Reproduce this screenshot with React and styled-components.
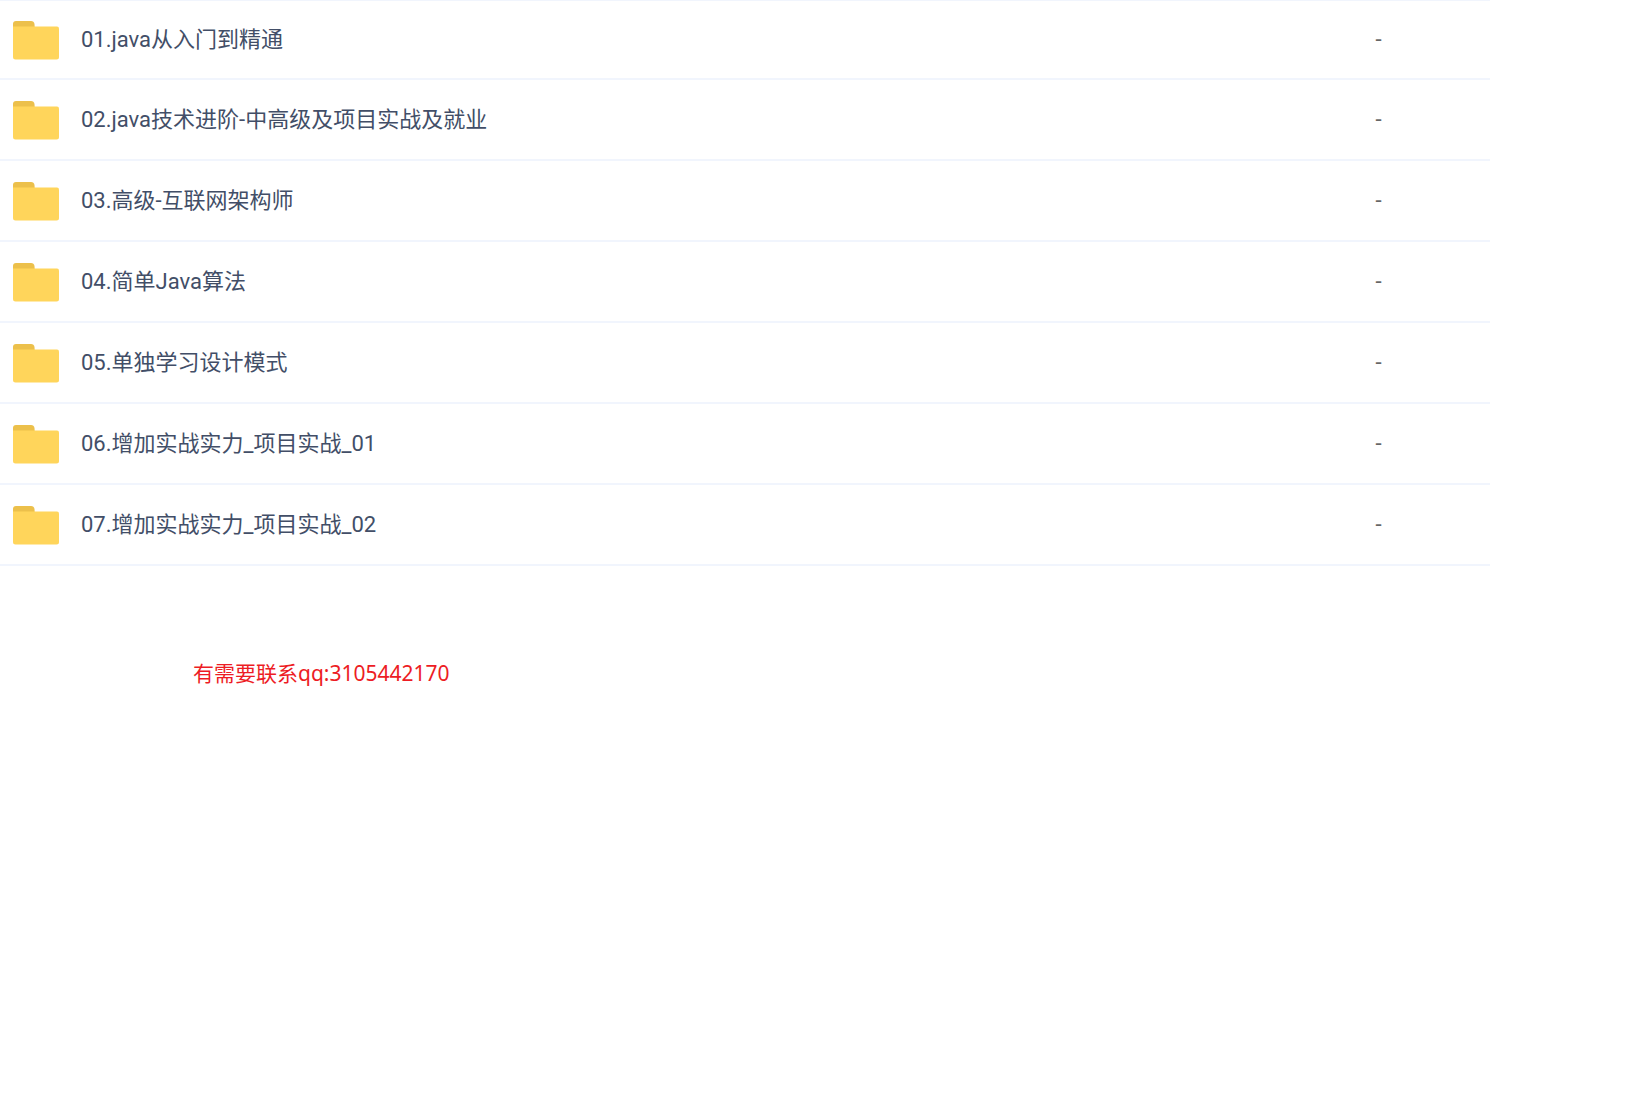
import React from "react";
import styled, { createGlobalStyle } from "styled-components";

const folders = [
  { name: "01.java从入门到精通", size: "-" },
  { name: "02.java技术进阶-中高级及项目实战及就业", size: "-" },
  { name: "03.高级-互联网架构师", size: "-" },
  { name: "04.简单Java算法", size: "-" },
  { name: "05.单独学习设计模式", size: "-" },
  { name: "06.增加实战实力_项目实战_01", size: "-" },
  { name: "07.增加实战实力_项目实战_02", size: "-" },
];

function FolderIcon() {
  return (
    <FolderSvg viewBox="0 0 46 39" aria-hidden="true">
      <path d="M0 10V3Q0 0 3 0H18Q21 0 21.500 3L22 10Z" fill="#ecc04b" />
      <path
        d="M0 5.500H44Q46 5.500 46 7.500V36Q46 38.500 43.500 38.500H2.500Q0 38.500 0 36Z"
        fill="#ffd55b"
      />
    </FolderSvg>
  );
}

function App() {
  return (
    <>
      <GlobalStyle />
      <PageStyled>
        <FileTable>
          <tbody>
            {folders.map((folder) => (
              <FileRow key={folder.name}>
                <NameCell>
                  <FolderLink href="#">
                    <FolderIcon />
                    {folder.name}
                  </FolderLink>
                </NameCell>
                <SizeCell>{folder.size}</SizeCell>
              </FileRow>
            ))}
          </tbody>
        </FileTable>
        <Contact>有需要联系qq:3105442170</Contact>
      </PageStyled>
    </>
  );
}

const GlobalStyle = createGlobalStyle`
  * {
    box-sizing: border-box;
  }

  body {
    margin: 0;
    background-color: #fff;
    font-family: "Noto Sans", "Noto Sans CJK SC", sans-serif;
  }
`;

const PageStyled = styled.main`
  min-height: 100vh;
  padding-right: 151px;
`;

const FileTable = styled.table`
  width: 100%;
  border-collapse: separate;
  border-spacing: 0;
  border-top: 1px solid #f1f5fd;
`;

const FileRow = styled.tr`
  height: 81px;

  &:first-child {
    height: 79px;
  }
`;

const Cell = styled.td`
  padding: 0;
  border-bottom: 2px solid #f1f5fd;
  font-size: 22px;
  line-height: 32px;
  vertical-align: middle;
`;

const NameCell = styled(Cell)`
  padding-top: 1px;
  font-family: Roboto, "Noto Sans CJK SC", sans-serif;
`;

const FolderLink = styled.a`
  display: flex;
  align-items: center;
  gap: 22px;
  padding-left: 13px;
  color: #424e67;
  text-decoration: none;
`;

const FolderSvg = styled.svg`
  flex: none;
  width: 46px;
  height: 39px;
`;

const SizeCell = styled(Cell)`
  width: 115px;
  padding-bottom: 5px;
  color: #666;
`;

const Contact = styled.p`
  margin: 91px 0 0 193px;
  color: #ed1c24;
  font-size: 21px;
  line-height: 32px;
`;

export default App;
